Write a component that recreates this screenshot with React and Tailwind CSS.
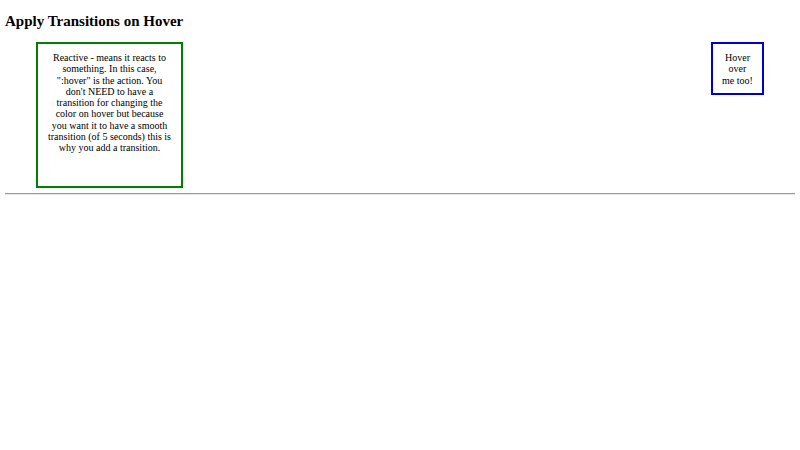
export default function App() {
    return (
        <div className="px-[5px] font-['Liberation_Serif',serif] text-black bg-white min-h-[450px]">
            <h2 className="pt-[12px] pb-[12px] text-[15px] leading-[18px] font-bold">Apply Transitions on Hover</h2>
            <div className="flex justify-between items-start px-[31px]">
                <div className="w-[147px] h-[146px] border-2 border-[#008000] px-[9px] pt-[8px] text-center text-[10px] leading-[11.3px]">
                    Reactive - means it reacts to something. In this case, ":hover" is the action. You don't NEED to have a transition for changing the color on hover but because you want it to have a smooth transition (of 5 seconds) this is why you add a transition.
                </div>
                <div className="w-[53px] h-[53px] border-2 border-[#0000cd] px-[8.75px] pt-[8px] text-center text-[10px] leading-[11.3px]">
                    Hover over me too!
                </div>
            </div>
            <hr className="mt-[5px] border-0 border-t border-t-[#9a9a9a] border-b border-b-[#e6e6e6]" />
        </div>
    );
}
